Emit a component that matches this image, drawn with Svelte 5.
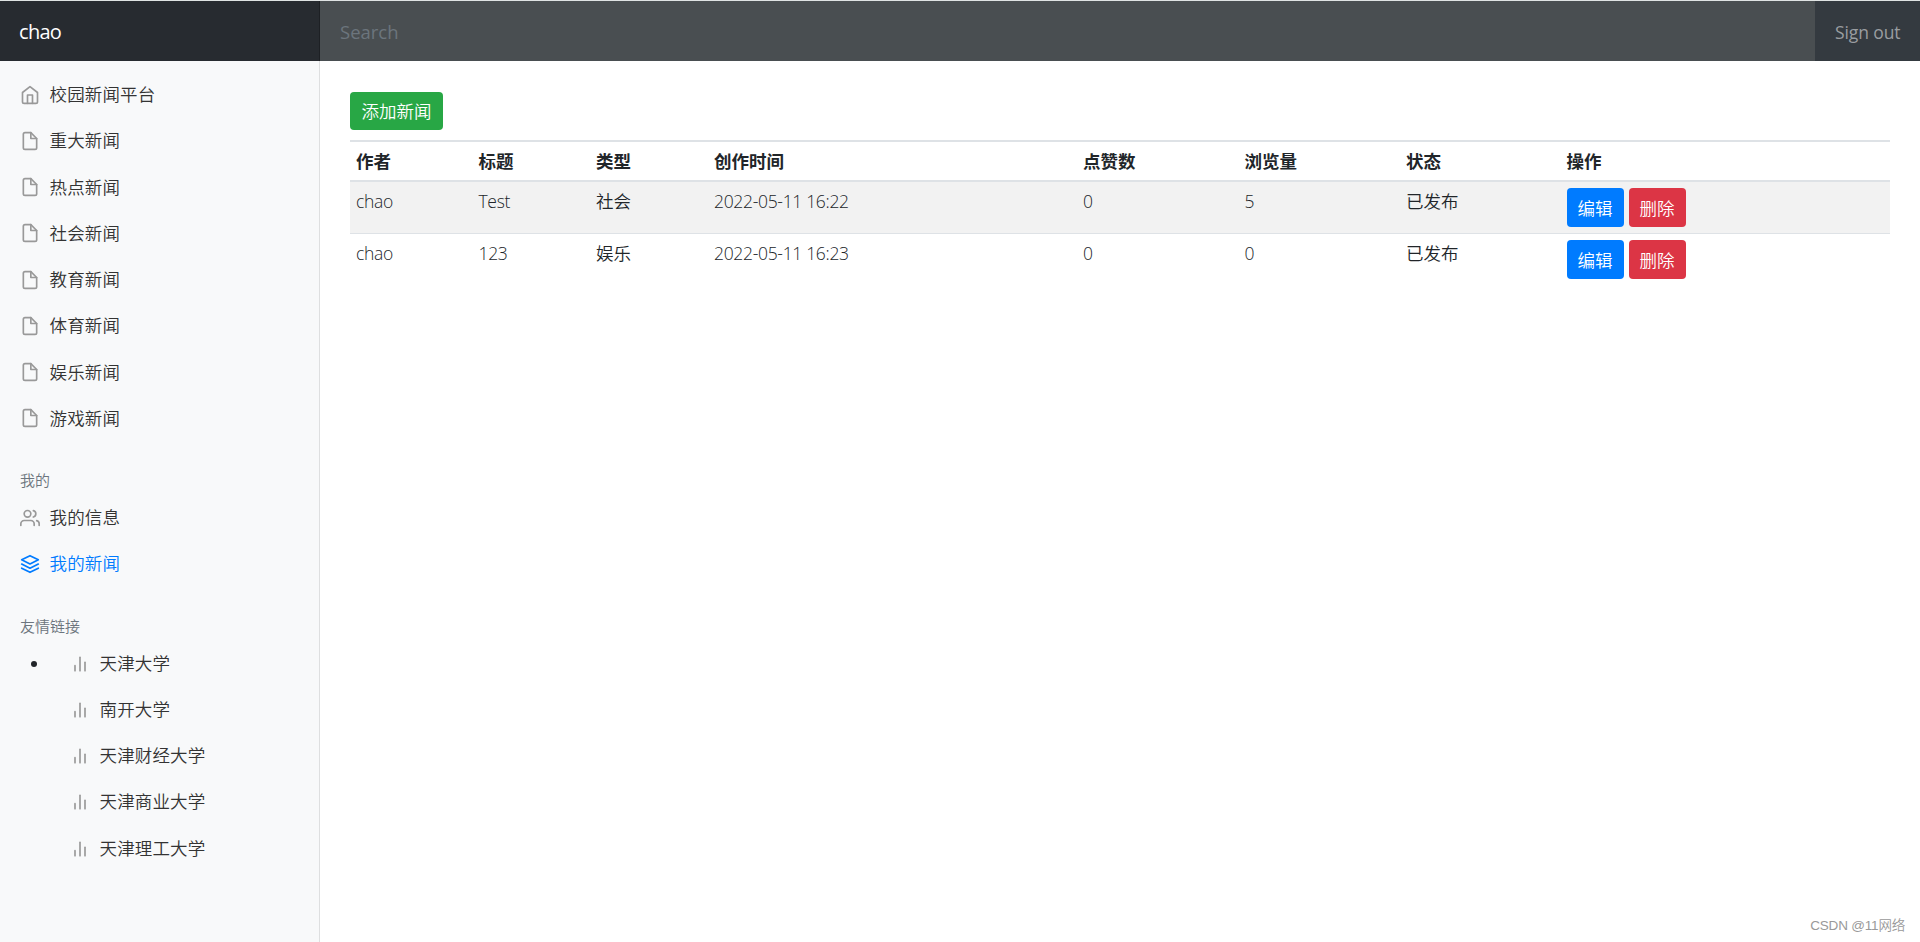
<script>
  const categories = ['校园新闻平台', '重大新闻', '热点新闻', '社会新闻', '教育新闻', '体育新闻', '娱乐新闻', '游戏新闻'];
  const mine = [
    { label: '我的信息', icon: 'users' },
    { label: '我的新闻', icon: 'layers', active: true }
  ];
  const schools = ['天津大学', '南开大学', '天津财经大学', '天津商业大学', '天津理工大学'];
  const headers = ['作者', '标题', '类型', '创作时间', '点赞数', '浏览量', '状态', '操作'];
  const rows = [
    ['chao', 'Test', '社会', '2022-05-11 16:22', '0', '5', '已发布'],
    ['chao', '123', '娱乐', '2022-05-11 16:23', '0', '0', '已发布']
  ];
</script>

{#snippet icon(name)}
  <svg class="icon" viewBox="0 0 24 24" aria-hidden="true">
    {#if name === 'home'}
      <path d="M3 9l9-7 9 7v11a2 2 0 0 1-2 2H5a2 2 0 0 1-2-2z" />
      <polyline points="9 22 9 12 15 12 15 22" />
    {:else if name === 'file'}
      <path d="M13 2H6a2 2 0 0 0-2 2v16a2 2 0 0 0 2 2h12a2 2 0 0 0 2-2V9z" />
      <polyline points="13 2 13 9 20 9" />
    {:else if name === 'users'}
      <path d="M17 21v-2a4 4 0 0 0-4-4H5a4 4 0 0 0-4 4v2" />
      <circle cx="9" cy="7" r="4" />
      <path d="M23 21v-2a4 4 0 0 0-3-3.87" />
      <path d="M16 3.13a4 4 0 0 1 0 7.75" />
    {:else if name === 'layers'}
      <polygon points="12 2 2 7 12 12 22 7 12 2" />
      <polyline points="2 17 12 22 22 17" />
      <polyline points="2 12 12 17 22 12" />
    {:else}
      <line x1="18" y1="20" x2="18" y2="10" />
      <line x1="12" y1="20" x2="12" y2="4" />
      <line x1="6" y1="20" x2="6" y2="14" />
    {/if}
  </svg>
{/snippet}

<div class="page">
  <header>
    <div class="brand">chao</div>
    <input class="search" placeholder="Search" aria-label="Search" />
    <div class="signout">Sign out</div>
  </header>
  <div class="body">
    <nav>
      <ul>
        {#each categories as label, i}
          <li class="link">{@render icon(i === 0 ? 'home' : 'file')}<span>{label}</span></li>
        {/each}
      </ul>
      <h6>我的</h6>
      <ul>
        {#each mine as item}
          <li class="link" class:active={item.active}>{@render icon(item.icon)}<span>{item.label}</span></li>
        {/each}
      </ul>
      <h6>友情链接</h6>
      <ul class="schools">
        {#each schools as label, i}
          <li class="link" class:bullet={i === 0}>{@render icon('bars')}<span>{label}</span></li>
        {/each}
      </ul>
    </nav>
    <main>
      <button class="btn add">添加新闻</button>
      <table>
        <colgroup>
          <col style="width:122.5px" /><col style="width:117.5px" /><col style="width:118px" /><col style="width:369px" />
          <col style="width:161.5px" /><col style="width:161.5px" /><col style="width:160.5px" /><col />
        </colgroup>
        <thead>
          <tr>{#each headers as h}<th>{h}</th>{/each}</tr>
        </thead>
        <tbody>
          {#each rows as row}
            <tr>
              {#each row as cell}<td>{cell}</td>{/each}
              <td><div class="actions"><button class="btn edit">编辑</button><button class="btn delete">删除</button></div></td>
            </tr>
          {/each}
        </tbody>
      </table>
    </main>
  </div>
  <div class="watermark">CSDN @11网络</div>
</div>

<style>
  .page {
    position: relative;
    box-sizing: border-box;
    height: 942px;
    overflow: hidden;
    display: flex;
    flex-direction: column;
    border-top: 1px solid #dfe3e3;
    background: #fff;
    color: #212529;
    font: 350 17.5px/26.25px 'Open Sans', 'Noto Sans CJK SC', sans-serif;
  }
  header {
    display: flex;
    height: 60px;
    flex: none;
    background: #343a40;
  }
  .brand {
    box-sizing: border-box;
    width: 320px;
    padding-left: 19px;
    background: #272b30;
    box-shadow: inset -1px 0 0 rgba(0, 0, 0, 0.25);
    color: #fff;
    font-size: 20px;
    font-weight: 400;
    line-height: 61px;
    letter-spacing: -0.7px;
  }
  .search {
    flex: 1;
    min-width: 0;
    margin: 0;
    padding: 2px 20px 0;
    border: 0;
    border-radius: 0;
    background: #494e51;
    color: #fff;
    font: 400 18.5px/28px 'Open Sans', sans-serif;
  }
  .search::placeholder {
    color: #6c757d;
    opacity: 1;
  }
  .signout {
    box-sizing: border-box;
    width: 105px;
    padding-left: 20px;
    color: #9a9da0;
    font-weight: 400;
    font-size: 17.5px;
    line-height: 62px;
    letter-spacing: -0.1px;
    white-space: nowrap;
  }
  .body {
    display: flex;
    flex: 1;
    min-height: 0;
  }
  nav {
    box-sizing: border-box;
    width: 320px;
    padding-top: 10px;
    background: #f8f9fa;
    box-shadow: inset -1px 0 0 rgba(0, 0, 0, 0.1);
  }
  ul {
    margin: 0;
    padding: 0;
    list-style: none;
  }
  .link {
    display: flex;
    align-items: center;
    gap: 9.5px;
    height: 46.25px;
    padding-left: 20px;
    color: #333;
    letter-spacing: 0.15px;
  }
  .icon {
    width: 20px;
    height: 20px;
    flex: none;
    margin-top: 1px;
    fill: none;
    stroke: #999;
    stroke-width: 2;
    stroke-linecap: round;
    stroke-linejoin: round;
  }
  .active {
    color: #007bff;
  }
  .active .icon {
    stroke: #007bff;
  }
  h6 {
    margin: 30px 20px 5px;
    color: #6c757d;
    font-size: 15px;
    font-weight: 350;
    line-height: 18px;
  }
  .schools .link {
    padding-left: 70px;
  }
  .schools .bullet {
    padding-left: 31px;
  }
  .bullet::before {
    content: '';
    width: 6px;
    height: 6px;
    margin: 2px 23.5px 0 0;
    border-radius: 50%;
    background: #212529;
  }
  .schools .icon {
    margin-top: 2px;
  }
  main {
    flex: 1;
    min-width: 0;
    padding: 31px 30px 0;
  }
  .btn {
    display: block;
    height: 38px;
    margin: 0;
    padding: 0;
    border: 0;
    border-radius: 4px;
    color: #fff;
    font: 350 17.5px/38px 'Open Sans', 'Noto Sans CJK SC', sans-serif;
  }
  .add {
    width: 93px;
    margin-bottom: 10px;
    background: #28a745;
  }
  table {
    width: 100%;
    table-layout: fixed;
    border-collapse: separate;
    border-spacing: 0;
  }
  th {
    height: 38px;
    padding: 0 6px;
    border-top: 2px solid #dee2e6;
    border-bottom: 2px solid #dee2e6;
    text-align: left;
    font-weight: 700;
  }
  td {
    height: 39px;
    padding: 6px;
    vertical-align: top;
  }
  td:nth-child(1),
  td:nth-child(2),
  td:nth-child(4) {
    letter-spacing: -0.32px;
  }
  tbody tr:first-child td {
    background: #f2f2f2;
    border-bottom: 1px solid #dee2e6;
  }
  .actions {
    display: flex;
    gap: 5px;
  }
  .actions .btn {
    width: 57px;
    height: 39px;
    line-height: 41px;
  }
  .edit {
    background: #007bff;
  }
  .delete {
    background: #dc3545;
  }
  .watermark {
    position: absolute;
    right: 15px;
    bottom: 6px;
    color: #999;
    font: 350 13.5px/20px 'Liberation Sans', 'Noto Sans CJK SC', sans-serif;
    letter-spacing: -0.2px;
  }
</style>
